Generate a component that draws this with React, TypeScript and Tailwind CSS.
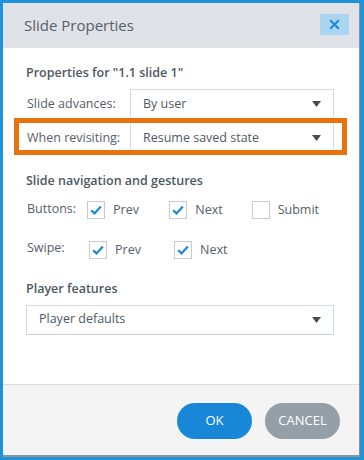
import { X } from "lucide-react";

const font = { fontFamily: '"Open Sans", "Noto Sans", sans-serif' };

function Caret() {
  return (
    <svg width="9" height="6" viewBox="0 0 9 6" aria-hidden>
      <path d="M0 0h9L4.5 6z" fill="#474d53" />
    </svg>
  );
}

function Select({ value, className = "" }: { value: string; className?: string }) {
  return (
    <div
      className={
        "flex items-center justify-between border border-[#d6dce1] border-b-[#c9cfd5] bg-white pr-[12px] pl-[12px] text-[12.5px] text-[#4f5963] " +
        className
      }
    >
      <span>{value}</span>
      <Caret />
    </div>
  );
}

function Check({ label, checked }: { label: string; checked: boolean }) {
  return (
    <div className="flex w-[85px] items-center gap-[8px]">
      <span className="flex h-[18px] w-[18px] items-center justify-center border border-[#c5ccd2] bg-white">
        {checked && (
          <svg width="12" height="10" viewBox="0 0 12 10" aria-hidden>
            <path d="M1.2 5.2l3.3 3.2L10.8 1.4" fill="none" stroke="#1d87d3" strokeWidth="2.2" />
          </svg>
        )}
      </span>
      <span className="text-[12.5px] text-[#56606a]">{label}</span>
    </div>
  );
}

export default function App() {
  return (
    <div
      className="h-[460px] w-[364px] border-[#1e93dc] border-t-[3px] border-r-[4px] border-b-[3px] border-l-[3px]"
      style={font}
    >
      <div className="flex h-full flex-col border-r border-b-2 border-[#8e9398] bg-white">
        {/* header */}
        <div className="flex h-[45px] shrink-0 items-center justify-between bg-[#dfe3e7] pr-[10px] pl-[21px]">
          <span className="text-[15px] text-[#56606b]">Slide Properties</span>
          <button className="mt-[-3px] flex h-[21px] w-[29px] items-center justify-center bg-[#a9d5f1]">
            <X size={15} strokeWidth={3.2} color="#1f86d2" />
          </button>
        </div>

        {/* body */}
        <div className="relative flex-1 pt-[15px] pr-[25px] pl-[23px] text-[#56606a]">
          <h3 className="h-[20px] text-[12.5px] leading-[20px] font-semibold text-[#4d5761]">
            Properties for "1.1 slide 1"
          </h3>

          <div className="mt-[6px] flex h-[30px] items-center">
            <span className="w-[104px] pl-[1px] text-[12.5px]">Slide advances:</span>
            <Select value="By user" className="h-full flex-1" />
          </div>
          <div className="relative flex h-[36px] items-center">
            <span className="mt-[2px] w-[104px] pl-[1px] text-[12.5px]">When revisiting:</span>
            <Select value="Resume saved state" className="h-full flex-1 border-t-0 pt-[3px]" />
            {/* highlight annotation */}
            <div className="pointer-events-none absolute top-[-1px] left-[-12px] h-[37px] w-[333px] border-[5px] border-[#e8730c]" />
          </div>

          <h3 className="mt-[16px] h-[20px] text-[12.5px] leading-[20px] font-semibold text-[#4d5761]">
            Slide navigation and gestures
          </h3>
          <div className="mt-[10px] flex items-center">
            <span className="mt-[-3px] w-[63px] pl-[1px] text-[12.5px]">Buttons:</span>
            <Check label="Prev" checked />
            <Check label="Next" checked />
            <Check label="Submit" checked={false} />
          </div>
          <div className="mt-[21px] flex items-center">
            <span className="mt-[-3px] w-[63px] pl-[1px] text-[12.5px]">Swipe:</span>
            <Check label="Prev" checked />
            <Check label="Next" checked />
          </div>

          <h3 className="mt-[19px] h-[20px] text-[12.5px] leading-[20px] font-semibold text-[#4d5761]">
            Player features
          </h3>
          <Select value="Player defaults" className="mt-[6px] h-[30px]" />
        </div>

        {/* footer */}
        <div className="flex h-[71px] shrink-0 justify-end gap-[13px] border-t border-[#dcdcdc] bg-[#f4f4f4] pt-[18px] pr-[19px]">
          <button className="h-[36px] w-[75px] rounded-full bg-[#1887d7] text-[13px] text-white">OK</button>
          <button className="h-[36px] w-[75px] rounded-full bg-[#959fa7] text-[13px] text-white">CANCEL</button>
        </div>
      </div>
    </div>
  );
}
